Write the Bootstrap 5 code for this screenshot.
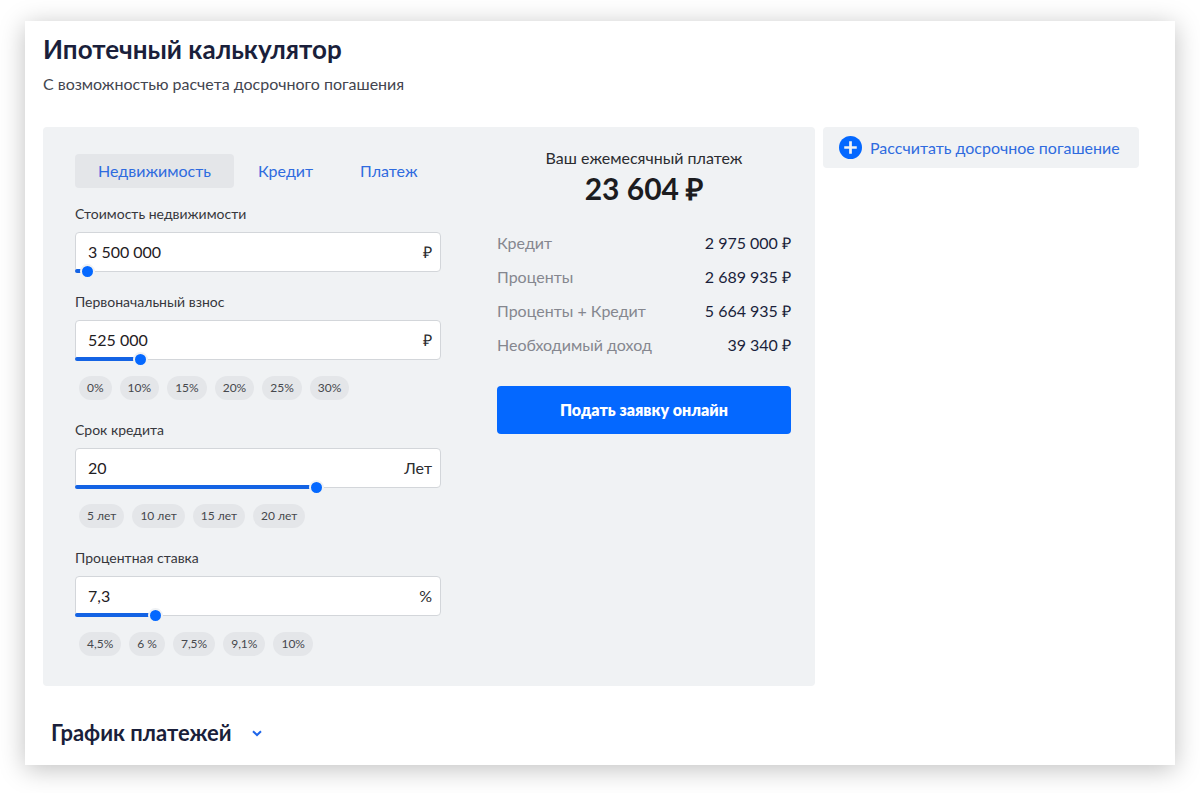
<!DOCTYPE html>
<html lang="ru">
<head>
<meta charset="utf-8">
<meta name="viewport" content="width=device-width, initial-scale=1">
<title>Ипотечный калькулятор</title>
<link href="https://cdn.jsdelivr.net/npm/bootstrap@5.3.0/dist/css/bootstrap.min.css" rel="stylesheet">
<style>
  :root { --accent: #0468ff; --panel: #f0f2f4; --chip: #e4e6e9; --ink: #1a1f3b; --fill-line: #1463e4; }
  body { font-family: Lato, "Open Sans", sans-serif; font-size: 16px; line-height: 24px; color: #2b2c30; background: #fff; }
  .sheet { margin: 21px 25px 28px; padding: 12px 36px 18px 18px; background: #fff; box-shadow: 0 4px 24px rgba(0,0,0,.25); }
  .sheet-title { font-size: 26px; line-height: 32px; font-weight: 700; color: var(--ink); margin-bottom: 7px; }
  .sheet-sub { color: #43454f; }
  .layout { display: grid; gap: 8px; align-items: start; padding-top: 7px; }
  .panel { background: var(--panel); padding: 19px 24px 30px 32px; display: grid; column-gap: 56px; row-gap: 32px; }
  @media (min-width: 992px) {
    .layout { grid-template-columns: 772fr 316fr; }
    .panel { grid-template-columns: 366fr 294fr; }
    .tabs { flex-wrap: nowrap; }
  }
  .tabs { margin: 8px 0 16px; column-gap: 1px; }
  .tabs .nav-link { padding: 5px 23px; color: #2f6bdf; border-radius: 4px; }
  .tabs .nav-link.active { background: var(--chip); color: #2f6bdf; }
  .field + .field { margin-top: 20px; }
  .field-label { display: block; font-size: 14px; line-height: 20px; margin-bottom: 8px; color: #36373c; }
  .box { position: relative; height: 40px; background: #fff; border: 1px solid #d3d6da; padding: 0 8px 0 12px; }
  .box input[type=text] { border: 0; outline: 0; background: none; padding: 0; min-width: 0; color: #1f2023; }
  .slider { position: absolute; left: -1px; right: -1px; bottom: -7px; width: calc(100% + 2px); height: 15px; margin: 0; background: none; appearance: none; -webkit-appearance: none; }
  .slider::-webkit-slider-runnable-track { height: 4px; border-radius: 2px; background: linear-gradient(var(--fill-line), var(--fill-line)) 0 0 / var(--fill) 100% no-repeat; }
  .slider::-webkit-slider-thumb { -webkit-appearance: none; width: 15px; height: 15px; margin-top: -5px; border-radius: 50%; border: 2px solid var(--panel); background: var(--accent); }
  .chips { margin: 16px 0 0 4px; }
  .chip { border: 0; border-radius: 12px; background: var(--chip); color: #46484d; font-size: 12px; line-height: 24px; padding: 0 8px; }
  .total { font-size: 30px; line-height: 36px; font-weight: 700; color: #1c1c1f; }
  .sums { margin: 20px 0 24px; }
  .sums th { font-weight: 400; color: #85878f; padding: 5px 0; }
  .sums td { color: var(--ink); text-align: right; padding: 5px 0; }
  .apply { background: var(--accent); color: #fff; height: 48px; font-size: 16px; font-weight: 800; border-radius: 4px; }
  .apply:hover { background: #0058e0; color: #fff; }
  .early { background: var(--panel); color: #2f6bdf; height: 41px; border: 0; padding: 0 16px; text-align: left; }
  .schedule { font-size: 22px; line-height: 28px; font-weight: 700; color: var(--ink); margin: 33px 0 0 8px; gap: 20px; }
</style>
</head>
<body>
<main class="sheet">
  <h1 class="sheet-title">Ипотечный калькулятор</h1>
  <p class="sheet-sub mb-0 pb-4">С возможностью расчета досрочного погашения</p>

  <div class="layout">
    <form class="panel rounded-1">
      <div>
        <ul class="nav nav-pills tabs">
          <li class="nav-item"><a class="nav-link active" href="#" aria-current="page">Недвижимость</a></li>
          <li class="nav-item"><a class="nav-link" href="#">Кредит</a></li>
          <li class="nav-item"><a class="nav-link" href="#">Платеж</a></li>
        </ul>

        <div class="field">
          <label class="field-label" for="price">Стоимость недвижимости</label>
          <div class="box rounded-1 d-flex align-items-center">
            <input class="flex-grow-1" type="text" id="price" value="3 500 000"><span>₽</span>
            <input class="slider" type="range" aria-label="Стоимость недвижимости" min="500000" max="230500000" step="100000" value="3500000" style="--fill:2%">
          </div>
        </div>

        <div class="field">
          <label class="field-label" for="down">Первоначальный взнос</label>
          <div class="box rounded-1 d-flex align-items-center">
            <input class="flex-grow-1" type="text" id="down" value="525 000"><span>₽</span>
            <input class="slider" type="range" aria-label="Первоначальный взнос" min="0" max="3200000" step="25000" value="525000" style="--fill:17%">
          </div>
          <div class="chips d-flex flex-wrap gap-2">
            <button type="button" class="chip">0%</button>
            <button type="button" class="chip">10%</button>
            <button type="button" class="chip">15%</button>
            <button type="button" class="chip">20%</button>
            <button type="button" class="chip">25%</button>
            <button type="button" class="chip">30%</button>
          </div>
        </div>

        <div class="field">
          <label class="field-label" for="term">Срок кредита</label>
          <div class="box rounded-1 d-flex align-items-center">
            <input class="flex-grow-1" type="text" id="term" value="20"><span>Лет</span>
            <input class="slider" type="range" aria-label="Срок кредита" min="0" max="30" value="20" style="--fill:66%">
          </div>
          <div class="chips d-flex flex-wrap gap-2">
            <button type="button" class="chip">5 лет</button>
            <button type="button" class="chip">10 лет</button>
            <button type="button" class="chip">15 лет</button>
            <button type="button" class="chip">20 лет</button>
          </div>
        </div>

        <div class="field">
          <label class="field-label" for="rate">Процентная ставка</label>
          <div class="box rounded-1 d-flex align-items-center">
            <input class="flex-grow-1" type="text" id="rate" value="7,3"><span>%</span>
            <input class="slider" type="range" aria-label="Процентная ставка" min="0" max="35" step="0.1" value="7.3" style="--fill:21%">
          </div>
          <div class="chips d-flex flex-wrap gap-2">
            <button type="button" class="chip">4,5%</button>
            <button type="button" class="chip">6 %</button>
            <button type="button" class="chip">7,5%</button>
            <button type="button" class="chip">9,1%</button>
            <button type="button" class="chip">10%</button>
          </div>
        </div>
      </div>

      <div>
        <div class="text-center">Ваш ежемесячный платеж</div>
        <div class="total text-center">23 604 ₽</div>
        <table class="sums w-100">
          <tbody>
            <tr><th scope="row">Кредит</th><td>2 975 000 ₽</td></tr>
            <tr><th scope="row">Проценты</th><td>2 689 935 ₽</td></tr>
            <tr><th scope="row">Проценты + Кредит</th><td>5 664 935 ₽</td></tr>
            <tr><th scope="row">Необходимый доход</th><td>39 340 ₽</td></tr>
          </tbody>
        </table>
        <button type="submit" class="btn apply w-100">Подать заявку онлайн</button>
      </div>
    </form>

    <button type="button" class="early rounded-1 d-flex align-items-center gap-2">
      <svg width="23" height="23" viewBox="0 0 22 22" aria-hidden="true"><circle cx="11" cy="11" r="11" fill="#0468ff"/><path d="M11 5v12M5 11h12" stroke="#f0f2f4" stroke-width="2.6"/></svg>
      Рассчитать досрочное погашение
    </button>
  </div>

  <h2 class="schedule d-flex align-items-center mb-0">График платежей
    <svg width="10" height="7" viewBox="0 0 10 7" aria-hidden="true"><path d="M1 1.2l4 3.8 4-3.8" fill="none" stroke="#1f66ea" stroke-width="2"/></svg>
  </h2>
</main>
<script src="https://cdn.jsdelivr.net/npm/bootstrap@5.3.0/dist/js/bootstrap.bundle.min.js"></script>
</body>
</html>
